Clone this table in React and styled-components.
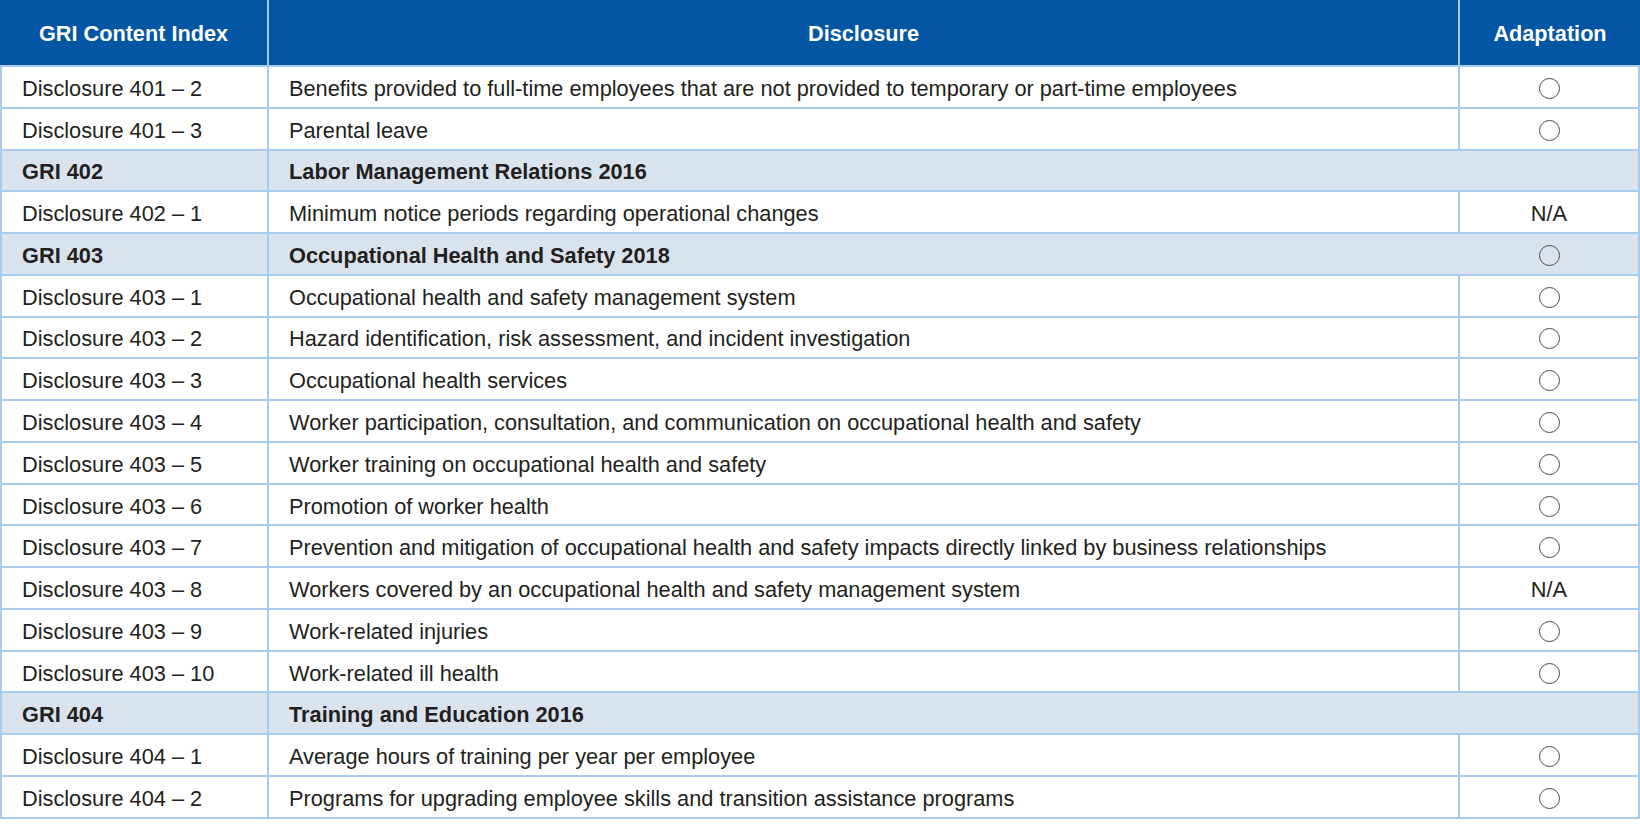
import React from "react";
import styled, { createGlobalStyle } from "styled-components";

const GlobalStyle = createGlobalStyle`
  html, body {
    margin: 0;
    padding: 0;
    background: #ffffff;
  }
  body {
    font-family: "Liberation Sans", Arial, Helvetica, sans-serif;
    color: #231f20;
  }
`;

const LINE = "#a7cbef";

const Table = styled.div`
  display: flex;
  flex-direction: column;
  width: 1640px;
`;

const HeaderRow = styled.div`
  display: grid;
  grid-template-columns: 269px 1191px 1fr;
  height: 67px;
  box-sizing: border-box;
  border-bottom: 2px solid ${LINE};
  background: #0356a3;
`;

const HeadCell = styled.div`
  display: flex;
  align-items: center;
  justify-content: center;
  box-sizing: border-box;
  padding-top: 3px;
  border-right: ${(p) => (p.$last ? "none" : `2px solid ${LINE}`)};
  color: #ffffff;
  font-weight: 700;
  font-size: 21.7px;
`;

const Row = styled.div`
  display: grid;
  grid-template-columns: 267px 1191px 1fr;
  height: 41.78px;
  box-sizing: border-box;
  border-left: 2px solid ${LINE};
  border-right: 2px solid ${LINE};
  border-bottom: 2px solid ${LINE};
  background: ${(p) => (p.$section ? "#d9e3ee" : "#ffffff")};
  font-weight: ${(p) => (p.$section ? 700 : 400)};
`;

const Cell = styled.div`
  display: flex;
  align-items: center;
  justify-content: ${(p) => (p.$center ? "center" : "flex-start")};
  box-sizing: border-box;
  padding-left: ${(p) => (p.$center ? "0" : "20px")};
  padding-top: 4px;
  border-right: ${(p) => (p.$open ? "none" : `2px solid ${LINE}`)};
  font-size: 21.75px;
  white-space: nowrap;
  overflow: hidden;
`;

const Circle = styled.span`
  display: block;
  width: 19px;
  height: 19px;
  margin-top: -1px;
  border: 1.2px solid #4a4a4a;
  border-radius: 50%;
`;

const rows = [
  { id: "Disclosure 401 – 2", text: "Benefits provided to full-time employees that are not provided to temporary or part-time employees", mark: "o" },
  { id: "Disclosure 401 – 3", text: "Parental leave", mark: "o" },
  { id: "GRI 402", text: "Labor Management Relations 2016", section: true },
  { id: "Disclosure 402 – 1", text: "Minimum notice periods regarding operational changes", mark: "N/A" },
  { id: "GRI 403", text: "Occupational Health and Safety 2018", section: true, mark: "o" },
  { id: "Disclosure 403 – 1", text: "Occupational health and safety management system", mark: "o" },
  { id: "Disclosure 403 – 2", text: "Hazard identification, risk assessment, and incident investigation", mark: "o" },
  { id: "Disclosure 403 – 3", text: "Occupational health services", mark: "o" },
  { id: "Disclosure 403 – 4", text: "Worker participation, consultation, and communication on occupational health and safety", mark: "o" },
  { id: "Disclosure 403 – 5", text: "Worker training on occupational health and safety", mark: "o" },
  { id: "Disclosure 403 – 6", text: "Promotion of worker health", mark: "o" },
  { id: "Disclosure 403 – 7", text: "Prevention and mitigation of occupational health and safety impacts directly linked by business relationships", mark: "o" },
  { id: "Disclosure 403 – 8", text: "Workers covered by an occupational health and safety management system", mark: "N/A" },
  { id: "Disclosure 403 – 9", text: "Work-related injuries", mark: "o" },
  { id: "Disclosure 403 – 10", text: "Work-related ill health", mark: "o" },
  { id: "GRI 404", text: "Training and Education 2016", section: true },
  { id: "Disclosure 404 – 1", text: "Average hours of training per year per employee", mark: "o" },
  { id: "Disclosure 404 – 2", text: "Programs for upgrading employee skills and transition assistance programs", mark: "o" },
];

const Mark = ({ value }) => {
  if (value === "o") return <Circle />;
  return value || null;
};

export default function App() {
  return (
    <>
      <GlobalStyle />
      <Table>
        <HeaderRow>
          <HeadCell>GRI Content Index</HeadCell>
          <HeadCell>Disclosure</HeadCell>
          <HeadCell $last>Adaptation</HeadCell>
        </HeaderRow>
        {rows.map((r) => (
          <Row key={r.id} $section={r.section}>
            <Cell>{r.id}</Cell>
            <Cell $open={r.section}>{r.text}</Cell>
            <Cell $center $open>
              <Mark value={r.mark} />
            </Cell>
          </Row>
        ))}
      </Table>
    </>
  );
}
